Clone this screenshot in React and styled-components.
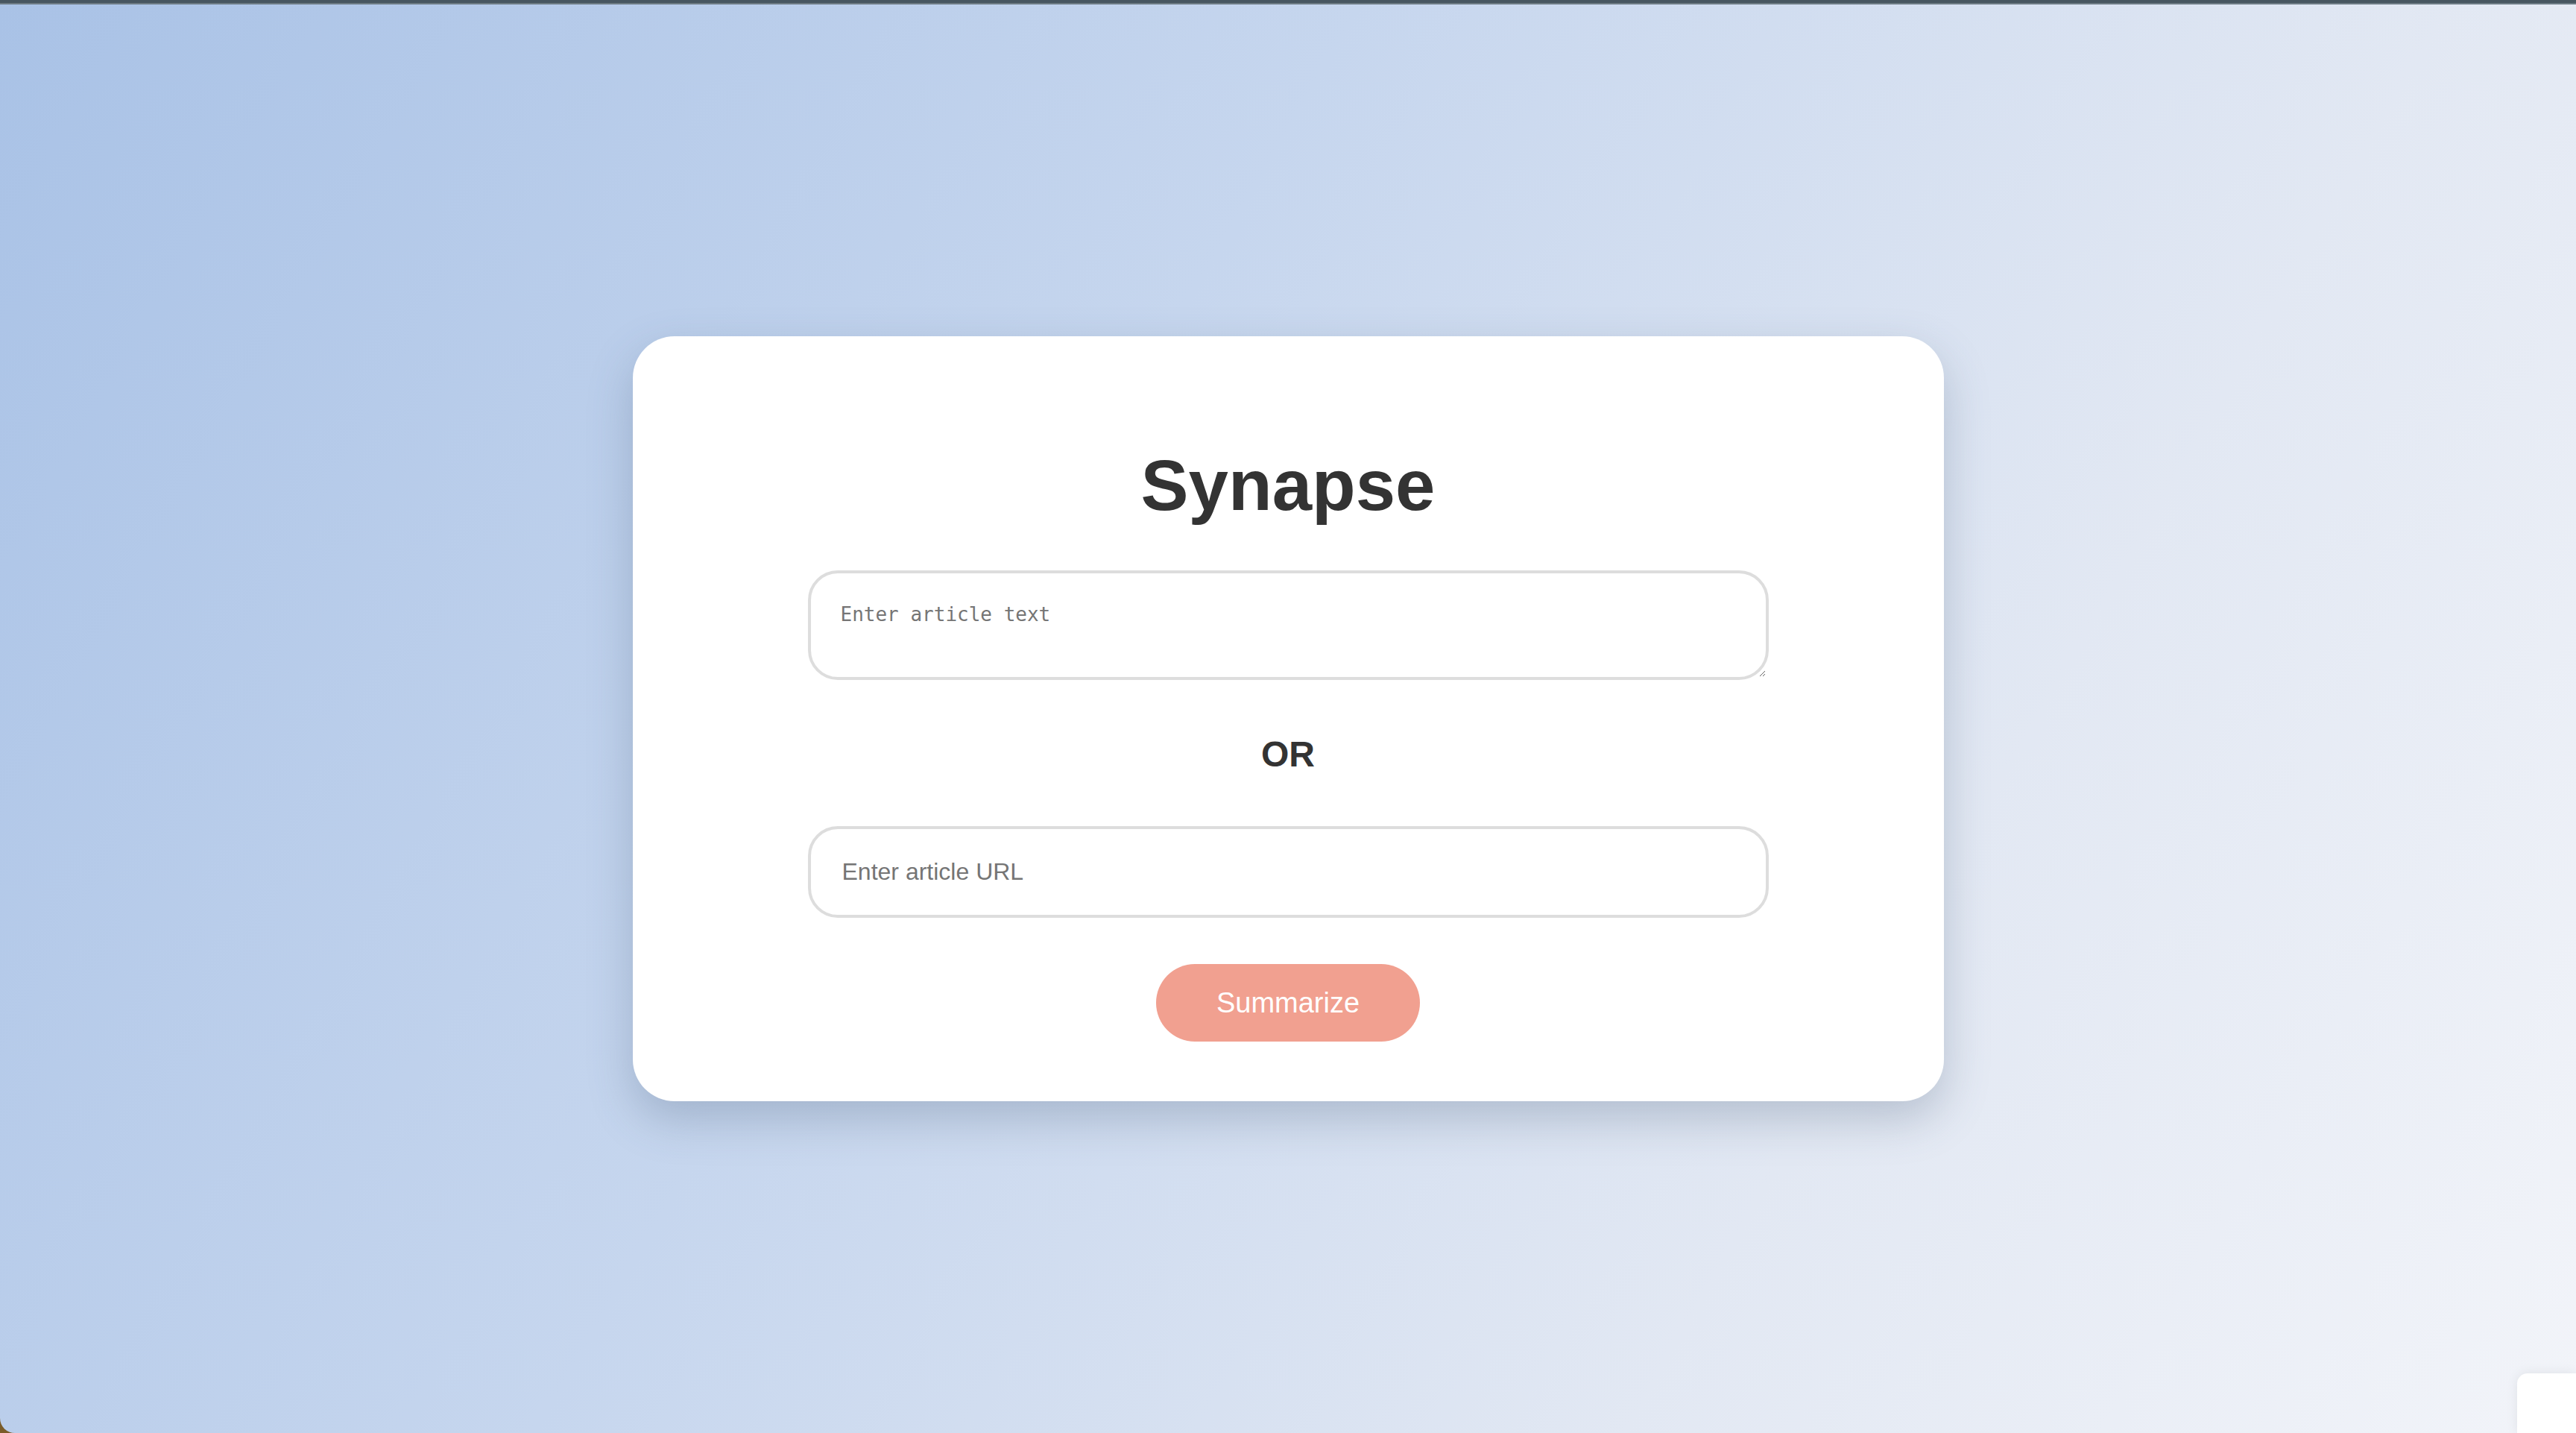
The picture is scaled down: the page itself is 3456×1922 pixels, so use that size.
import styled, { createGlobalStyle } from "styled-components";

const GlobalStyle = createGlobalStyle`
  html, body {
    margin: 0;
    padding: 0;
    height: 100%;
  }
  body {
    font-family: "Liberation Sans", Arial, sans-serif;
    overflow: hidden;
  }
  *, *::before, *::after {
    box-sizing: border-box;
  }
`;

const Screen = styled.div`
  position: relative;
  height: 100vh;
  display: flex;
  flex-direction: column;
  background: #7a5c2a;
`;

const TopBar = styled.div`
  height: 6px;
  flex: none;
  background: #475660;
  border-bottom: 2px solid #6d7b84;
`;

const Main = styled.main`
  flex: 1;
  display: flex;
  align-items: center;
  justify-content: center;
  background: linear-gradient(120deg, #a9c2e6 0%, #c6d6ee 40%, #e2e8f3 72%, #f2f4f9 100%);
  border-bottom-left-radius: 20px;
`;

const Card = styled.div`
  width: 1759px;
  background: #ffffff;
  border-radius: 56px;
  padding: 145px 235px 80px;
  box-shadow: 0 24px 60px rgba(70, 90, 120, 0.28);
  display: flex;
  flex-direction: column;
  align-items: center;
`;

const Title = styled.h1`
  margin: 0 0 59px;
  font-size: 96px;
  line-height: 110px;
  font-weight: 700;
  color: #333333;
`;

const TextArea = styled.textarea`
  width: 100%;
  height: 147px;
  padding: 40px 40px;
  border: 4px solid #dddddd;
  border-radius: 40px;
  font-family: "DejaVu Sans Mono", "Liberation Mono", monospace;
  font-size: 26px;
  color: #333;
  outline: none;
  resize: vertical;
  &::placeholder {
    color: #757575;
  }
`;

const Divider = styled.div`
  margin: 72px 0 69px;
  font-size: 48px;
  line-height: 55px;
  font-weight: 700;
  color: #333333;
`;

const UrlInput = styled.input`
  width: 100%;
  height: 123px;
  padding: 0 42px;
  border: 4px solid #dddddd;
  border-radius: 40px;
  font-family: "Liberation Sans", Arial, sans-serif;
  font-size: 32px;
  color: #333;
  outline: none;
  &::placeholder {
    color: #757575;
  }
`;

const Button = styled.button`
  margin-top: 62px;
  width: 354px;
  height: 104px;
  border: none;
  border-radius: 52px;
  background: #f1a090;
  color: #ffffff;
  font-family: "Liberation Sans", Arial, sans-serif;
  font-size: 38px;
  cursor: pointer;
`;

const CornerWidget = styled.div`
  position: absolute;
  right: 0;
  bottom: 0;
  width: 79px;
  height: 80px;
  background: #ffffff;
  border-top-left-radius: 14px;
  box-shadow: 0 0 16px rgba(0, 0, 0, 0.08);
`;

export default function App() {
  return (
    <>
      <GlobalStyle />
      <Screen>
        <TopBar />
        <Main>
          <Card>
            <Title>Synapse</Title>
            <TextArea placeholder="Enter article text" />
            <Divider>OR</Divider>
            <UrlInput type="text" placeholder="Enter article URL" />
            <Button>Summarize</Button>
          </Card>
        </Main>
        <CornerWidget />
      </Screen>
    </>
  );
}
